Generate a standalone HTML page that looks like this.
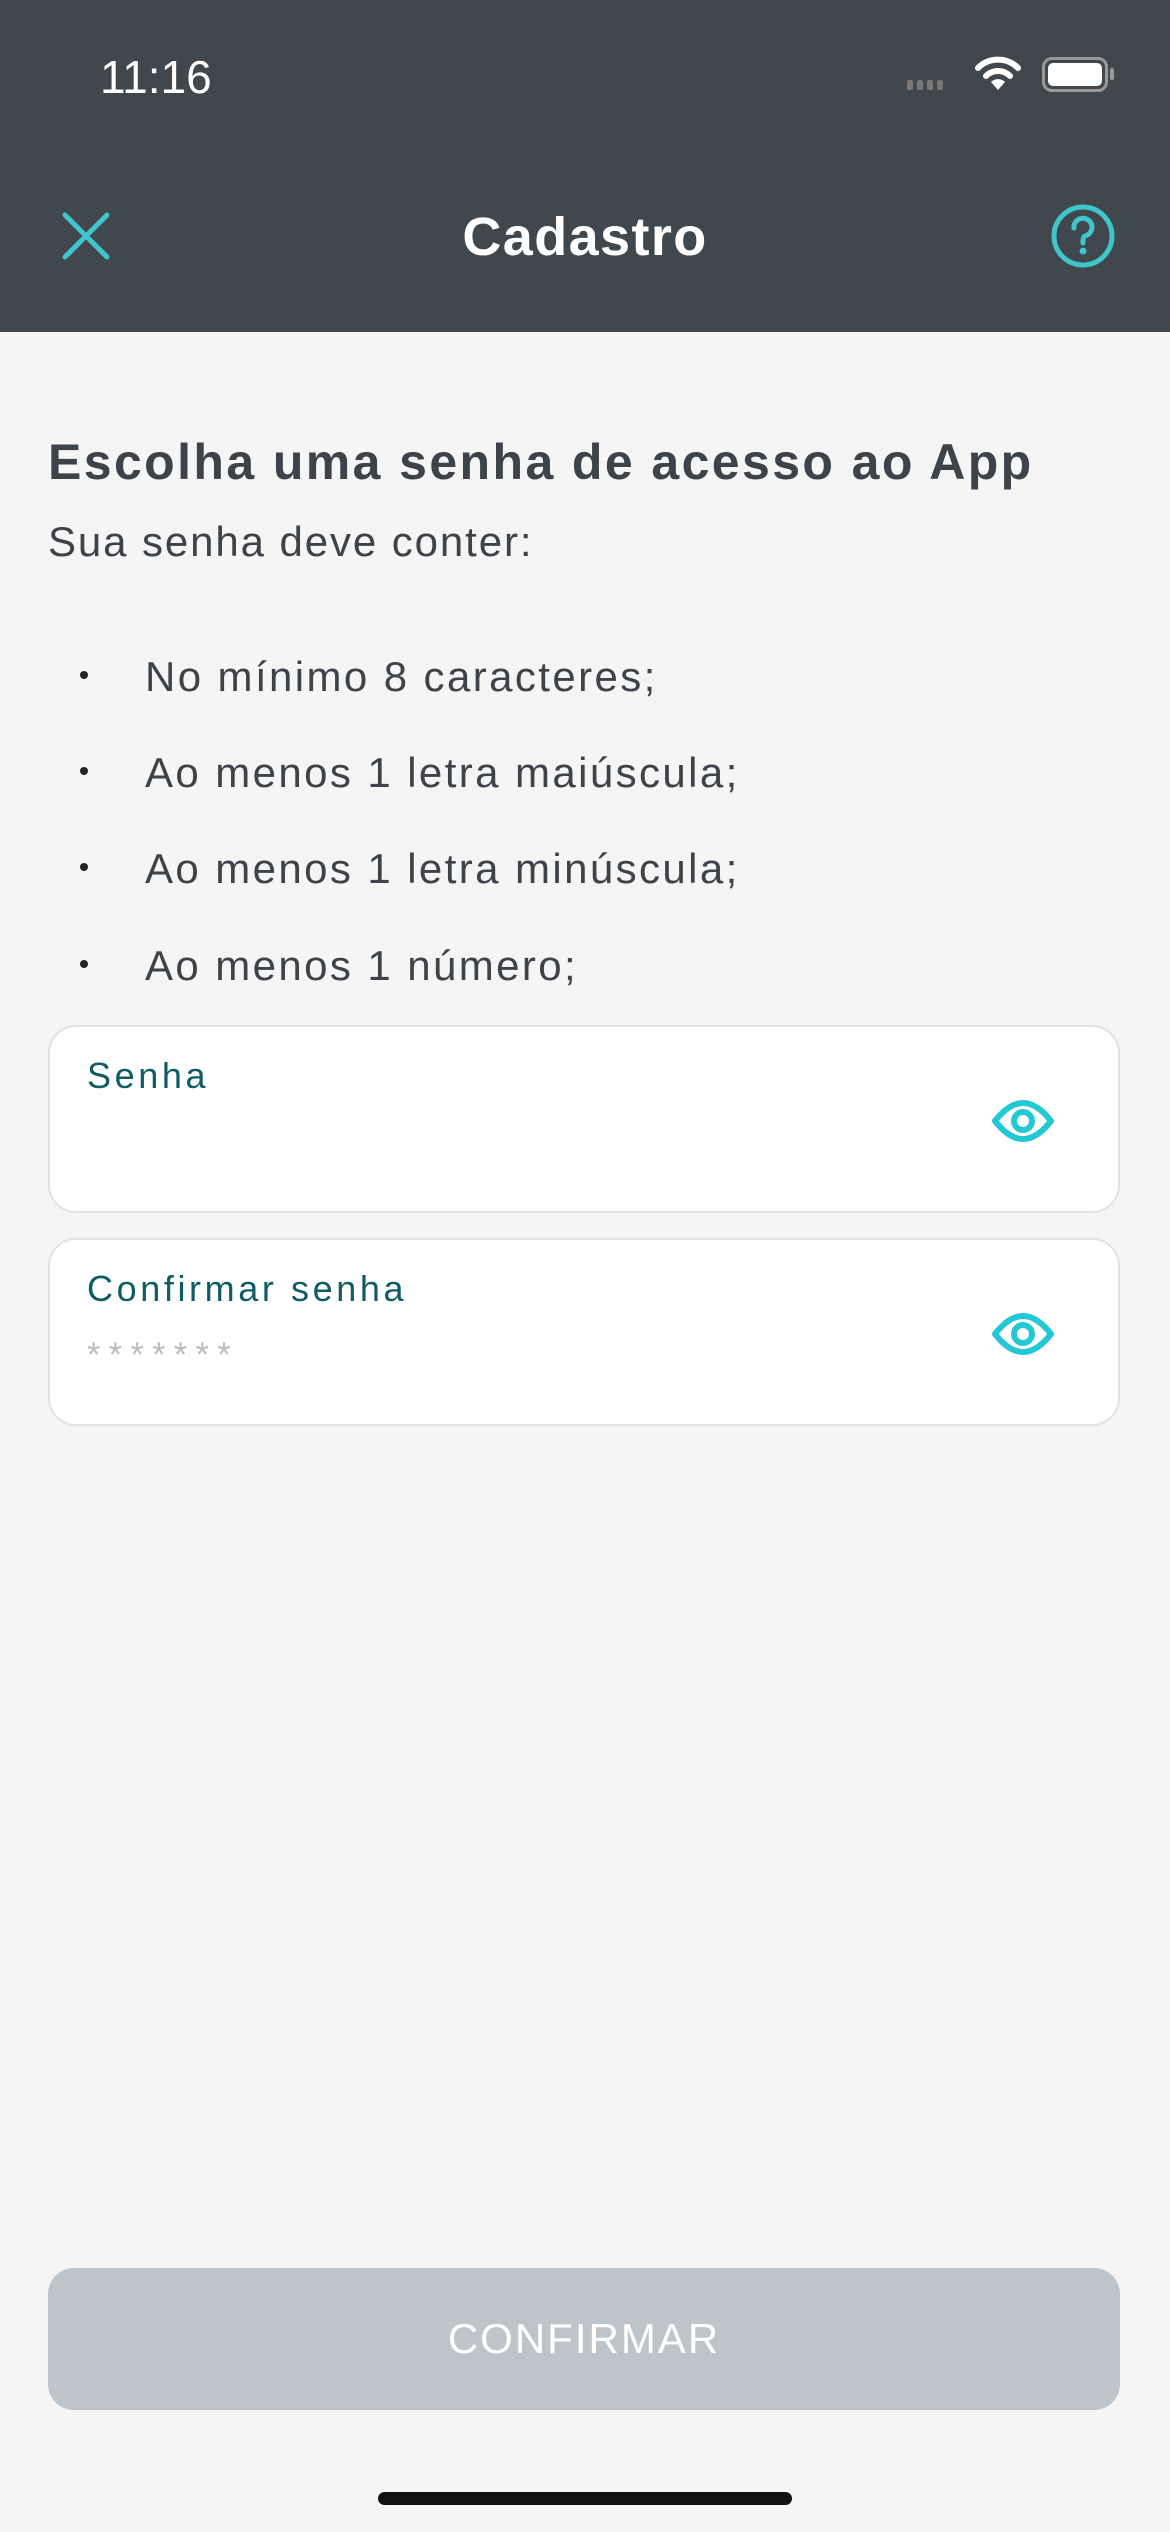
<!DOCTYPE html>
<html><head><meta charset="utf-8"><style>
*{margin:0;padding:0;box-sizing:border-box}
body{width:1170px;height:2532px;background:#f5f5f5;font-family:"Liberation Sans",sans-serif;position:relative;overflow:hidden}
.hdr{position:absolute;left:0;top:0;width:1170px;height:332px;background:#40474d}
.abs{position:absolute;white-space:nowrap}
.field{position:absolute;left:48px;width:1072px;height:188px;background:#fff;border:2px solid #e2e2e2;border-radius:28px}
.lbl{position:absolute;left:37px;top:28px;font-size:36px;color:#0f5c63;letter-spacing:3.6px}
.li{position:absolute;left:145px;font-size:42px;color:#3d4348;letter-spacing:2.4px}
.dot{position:absolute;left:80px;width:8px;height:8px;border-radius:50%;background:#222}
</style></head><body>
<div class="hdr">
<div class="abs" style="left:100px;top:50px;font-size:46px;color:#fff">11:16</div>
<div class="abs" style="left:907px;top:80px;display:flex;gap:4px"><i style="width:6px;height:10px;background:#777;border-radius:2px"></i><i style="width:6px;height:10px;background:#777;border-radius:2px"></i><i style="width:6px;height:10px;background:#777;border-radius:2px"></i><i style="width:6px;height:10px;background:#777;border-radius:2px"></i></div>
<svg class="abs" style="left:974px;top:54px" width="48" height="38" viewBox="0 0 48 38"><path d="M4 14 A28 28 0 0 1 44 14" stroke="#fff" stroke-width="6" fill="none" stroke-linecap="round"/><path d="M12 22 A17 17 0 0 1 36 22" stroke="#fff" stroke-width="6" fill="none" stroke-linecap="round"/><path d="M24 36 L17 28 A10 10 0 0 1 31 28 Z" fill="#fff"/></svg>
<div class="abs" style="left:1042px;top:57px;width:66px;height:35px;border:3px solid #999;border-radius:10px;padding:3px"><div style="width:100%;height:100%;background:#fff;border-radius:5px"></div></div>
<div class="abs" style="left:1110px;top:68px;width:4px;height:12px;background:#999;border-radius:2px"></div>
<svg class="abs" style="left:60px;top:210px" width="52" height="52" viewBox="0 0 52 52"><path d="M5 5 L47 47 M47 5 L5 47" stroke="#3ec6cc" stroke-width="5" stroke-linecap="round"/></svg>
<div class="abs" style="left:0;width:1170px;text-align:center;top:206px;font-size:54px;font-weight:bold;color:#fff;letter-spacing:1.4px">Cadastro</div>
<svg class="abs" style="left:1050px;top:203px" width="66" height="66" viewBox="0 0 66 66"><circle cx="33" cy="33" r="29" stroke="#3ec6cc" stroke-width="5" fill="none"/><path d="M24 25 A9 9 0 1 1 35 33 Q33 34 33 38 V40" stroke="#3ec6cc" stroke-width="5" fill="none" stroke-linecap="round"/><circle cx="33" cy="48" r="3.5" fill="#3ec6cc"/></svg>
</div>
<div class="abs" style="left:48px;top:433px;font-size:50px;font-weight:bold;color:#3d4348;letter-spacing:2.4px">Escolha uma senha de acesso ao App</div>
<div class="abs" style="left:48px;top:518px;font-size:42px;color:#3d4348;letter-spacing:1.9px">Sua senha deve conter:</div>
<i class="dot" style="top:671px"></i><div class="li" style="top:653px">No mínimo 8 caracteres;</div>
<i class="dot" style="top:767px"></i><div class="li" style="top:749px">Ao menos 1 letra maiúscula;</div>
<i class="dot" style="top:863px"></i><div class="li" style="top:845px">Ao menos 1 letra minúscula;</div>
<i class="dot" style="top:960px"></i><div class="li" style="top:942px">Ao menos 1 número;</div>
<div class="field" style="top:1025px"><div class="lbl">Senha</div>
<svg style="position:absolute;left:942px;top:70px" width="62" height="48" viewBox="0 0 62 48"><path d="M3 24 Q31 -12 59 24 Q31 60 3 24 Z" stroke="#22c8d3" stroke-width="6" fill="none" stroke-linejoin="round"/><circle cx="31" cy="24" r="9" stroke="#22c8d3" stroke-width="6" fill="none"/></svg></div>
<div class="field" style="top:1238px"><div class="lbl">Confirmar senha</div>
<div style="position:absolute;left:37px;top:96px;font-size:34px;color:#bbb;letter-spacing:8.5px">*******</div>
<svg style="position:absolute;left:942px;top:70px" width="62" height="48" viewBox="0 0 62 48"><path d="M3 24 Q31 -12 59 24 Q31 60 3 24 Z" stroke="#22c8d3" stroke-width="6" fill="none" stroke-linejoin="round"/><circle cx="31" cy="24" r="9" stroke="#22c8d3" stroke-width="6" fill="none"/></svg></div>
<div class="abs" style="left:48px;top:2268px;width:1072px;height:142px;background:#bec5ca;border-radius:26px;color:#fff;font-size:42px;text-align:center;line-height:142px;letter-spacing:2px">CONFIRMAR</div>
<div class="abs" style="left:378px;top:2492px;width:414px;height:13px;background:#111;border-radius:7px"></div>
</body></html>
